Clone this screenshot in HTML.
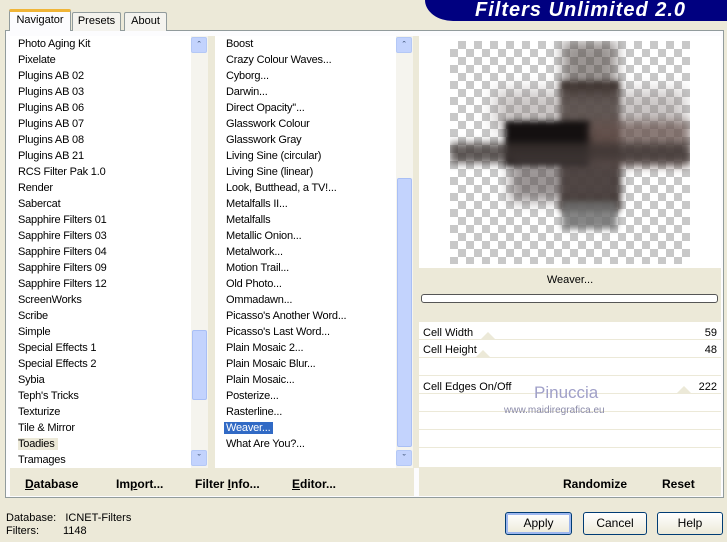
<!DOCTYPE html>
<html><head><meta charset="utf-8"><style>
*{margin:0;padding:0;box-sizing:border-box}
body{width:727px;height:542px;background:#ece9d8;font-family:"Liberation Sans",sans-serif;font-size:11px;color:#000;position:relative;overflow:hidden}
.abs{position:absolute}
.banner{left:425px;top:0;width:302px;height:21px;background:#000080;border-bottom-left-radius:28px 21px;color:#fff;font-weight:bold;font-style:italic;font-size:20px;padding-left:50px;line-height:21px;letter-spacing:1px}
.tab{top:12px;height:19px;background:#f4f3ee;border:1px solid #919b9c;border-bottom:none;text-align:center;line-height:17px;border-radius:2px 2px 0 0}
.panel{left:5px;top:30px;width:719px;height:468px;background:#fcfcfe;border:1px solid #919b9c}
.list{background:#fff}
.row{height:16px;line-height:16px;padding-left:8px;white-space:nowrap;letter-spacing:-0.2px}
.sb{background:#f5f4ee}
.sbtn{width:16px;height:16px;background:#c3d3fd;border:1px solid #b4c8f6;border-radius:2px;color:#4d6185;font-size:9px;text-align:center;line-height:14px;font-weight:bold}
.thumb{background:#c3d3fd;border:1px solid #a9bff5;border-radius:2px}
.bar{background:#ece9d8}
.bb{font-weight:bold;font-size:12px;top:477px}
.prow{left:419px;width:302px;height:17px;background:#fff;border-bottom:1px solid #ece9d8;line-height:16px;padding:0 4px}
.btn{top:512px;height:23px;border:1px solid #003c74;border-radius:3px;background:linear-gradient(#fff,#ece9d8);text-align:center;line-height:21px;font-size:12px}
</style></head><body>
<div class="abs banner">Filters Unlimited 2.0</div>
<div class="abs panel"></div>
<div class="abs tab" style="left:9px;top:9px;width:62px;height:22px;background:#fcfcfe;border-top:3px solid #f0b537;z-index:2;border-bottom:none">Navigator</div>
<div class="abs tab" style="left:72px;width:49px">Presets</div>
<div class="abs tab" style="left:124px;width:43px">About</div>

<div class="abs list" style="left:10px;top:36px;width:182px;height:432px">
<div class="row">Photo Aging Kit</div><div class="row">Pixelate</div><div class="row">Plugins AB 02</div><div class="row">Plugins AB 03</div><div class="row">Plugins AB 06</div><div class="row">Plugins AB 07</div><div class="row">Plugins AB 08</div><div class="row">Plugins AB 21</div><div class="row">RCS Filter Pak 1.0</div><div class="row">Render</div><div class="row">Sabercat</div><div class="row">Sapphire Filters 01</div><div class="row">Sapphire Filters 03</div><div class="row">Sapphire Filters 04</div><div class="row">Sapphire Filters 09</div><div class="row">Sapphire Filters 12</div><div class="row">ScreenWorks</div><div class="row">Scribe</div><div class="row">Simple</div><div class="row">Special Effects 1</div><div class="row">Special Effects 2</div><div class="row">Sybia</div><div class="row">Teph's Tricks</div><div class="row">Texturize</div><div class="row">Tile &amp; Mirror</div><div class="row"><span style="background:#ece9d8;padding:0 3px 0 0">Toadies</span></div><div class="row">Tramages</div>
</div>
<div class="abs sb" style="left:191px;top:36px;width:17px;height:432px"></div>
<div class="abs sbtn" style="left:191px;top:37px">&#710;</div>
<div class="abs thumb" style="left:192px;top:330px;width:15px;height:70px"></div>
<div class="abs sbtn" style="left:191px;top:450px">&#711;</div>
<div class="abs" style="left:208px;top:36px;width:7px;height:432px;background:#ece9d8"></div>

<div class="abs list" style="left:215px;top:36px;width:182px;height:432px;padding-left:3px">
<div class="row">Boost</div><div class="row">Crazy Colour Waves...</div><div class="row">Cyborg...</div><div class="row">Darwin...</div><div class="row">Direct Opacity''...</div><div class="row">Glasswork Colour</div><div class="row">Glasswork Gray</div><div class="row">Living Sine (circular)</div><div class="row">Living Sine (linear)</div><div class="row">Look, Butthead, a TV!...</div><div class="row">Metalfalls II...</div><div class="row">Metalfalls</div><div class="row">Metallic Onion...</div><div class="row">Metalwork...</div><div class="row">Motion Trail...</div><div class="row">Old Photo...</div><div class="row">Ommadawn...</div><div class="row">Picasso's Another Word...</div><div class="row">Picasso's Last Word...</div><div class="row">Plain Mosaic 2...</div><div class="row">Plain Mosaic Blur...</div><div class="row">Plain Mosaic...</div><div class="row">Posterize...</div><div class="row">Rasterline...</div><div class="row"><span style="background:#316ac5;color:#fff;padding:0 3px 0 2px;margin-left:-2px">Weaver...</span></div><div class="row">What Are You?...</div>
</div>
<div class="abs sb" style="left:396px;top:36px;width:17px;height:432px"></div>
<div class="abs sbtn" style="left:396px;top:37px">&#710;</div>
<div class="abs thumb" style="left:397px;top:178px;width:15px;height:269px"></div>
<div class="abs sbtn" style="left:396px;top:450px">&#711;</div>
<div class="abs" style="left:413px;top:36px;width:6px;height:432px;background:#ece9d8"></div>

<div class="abs" style="left:419px;top:36px;width:302px;height:232px;background:#fff"></div>
<div class="abs" style="left:450px;top:41px;width:240px;height:223px;background-color:#fff;background-image:repeating-conic-gradient(#c8c8c8 0 25%,#fff 0 50%);background-size:16px 16px;overflow:hidden">
 <div class="abs" style="left:112px;top:0;width:55px;height:50px;background:#4a403c;filter:blur(6px);opacity:.55"></div>
 <div class="abs" style="left:110px;top:40px;width:60px;height:130px;background:#2d221e;filter:blur(3px);opacity:.9"></div>
 <div class="abs" style="left:45px;top:50px;width:190px;height:40px;background:#8a807e;filter:blur(8px);opacity:.45"></div>
 <div class="abs" style="left:55px;top:80px;width:85px;height:45px;background:#141010;filter:blur(3px)"></div>
 <div class="abs" style="left:140px;top:80px;width:100px;height:45px;background:#6a5550;filter:blur(5px);opacity:.75"></div>
 <div class="abs" style="left:0;top:102px;width:240px;height:20px;background:#3e3634;filter:blur(4px);opacity:.8"></div>
 <div class="abs" style="left:60px;top:120px;width:110px;height:40px;background:#5a5050;filter:blur(6px);opacity:.6"></div>
 <div class="abs" style="left:112px;top:160px;width:55px;height:28px;background:#707070;filter:blur(3px);opacity:.85"></div>
</div>
<div class="abs bar" style="left:419px;top:268px;width:302px;height:54px"></div>
<div class="abs" style="left:419px;top:274px;width:302px;text-align:center">Weaver...</div>
<div class="abs" style="left:421px;top:294px;width:297px;height:9px;border:1px solid #555;border-radius:3px;background:#fff"></div>
<div class="abs prow" style="top:322px;padding-top:3px;height:18px">Cell Width<span style="float:right">59</span></div>
<div class="abs prow" style="top:340px;padding-top:2px;height:18px">Cell Height<span style="float:right">48</span></div>
<div class="abs prow" style="top:358px;height:18px"></div>
<div class="abs prow" style="top:376px;padding-top:3px;height:18px">Cell Edges On/Off<span style="float:right">222</span></div>
<div class="abs prow" style="top:394px;height:18px"></div>
<div class="abs prow" style="top:412px;height:18px"></div>
<div class="abs prow" style="top:430px;height:18px"></div>
<div class="abs prow" style="top:448px;height:20px"></div>
<div class="abs" style="left:480px;top:332px;border:8px solid transparent;border-bottom-color:#ece9d8;border-top:none;width:0"></div>
<div class="abs" style="left:475px;top:350px;border:8px solid transparent;border-bottom-color:#ece9d8;border-top:none"></div>
<div class="abs" style="left:676px;top:386px;border:8px solid transparent;border-bottom-color:#ece9d8;border-top:none"></div>
<div class="abs" style="left:534px;top:383px;font-size:17px;color:#a0a0c8">Pinuccia</div>
<div class="abs" style="left:504px;top:405px;font-size:10px;color:#8a8aa8">www.maidiregrafica.eu</div>

<div class="abs bar" style="left:10px;top:468px;width:404px;height:28px"></div>
<div class="abs bar" style="left:419px;top:468px;width:302px;height:28px"></div>
<div class="abs bb" style="left:25px"><u>D</u>atabase</div>
<div class="abs bb" style="left:116px">Im<u>p</u>ort...</div>
<div class="abs bb" style="left:195px">Filter <u>I</u>nfo...</div>
<div class="abs bb" style="left:292px"><u>E</u>ditor...</div>
<div class="abs bb" style="left:563px">Randomize</div>
<div class="abs bb" style="left:662px">Reset</div>

<div class="abs" style="left:6px;top:512px;line-height:13px">Database:&nbsp;&nbsp; ICNET-Filters<br>Filters:<span style="position:absolute;left:57px">1148</span></div>
<div class="abs btn" style="left:505px;width:67px;box-shadow:inset 0 0 0 2px #9db7ef">Apply</div>
<div class="abs btn" style="left:583px;width:64px">Cancel</div>
<div class="abs btn" style="left:657px;width:66px">Help</div>
</body></html>
